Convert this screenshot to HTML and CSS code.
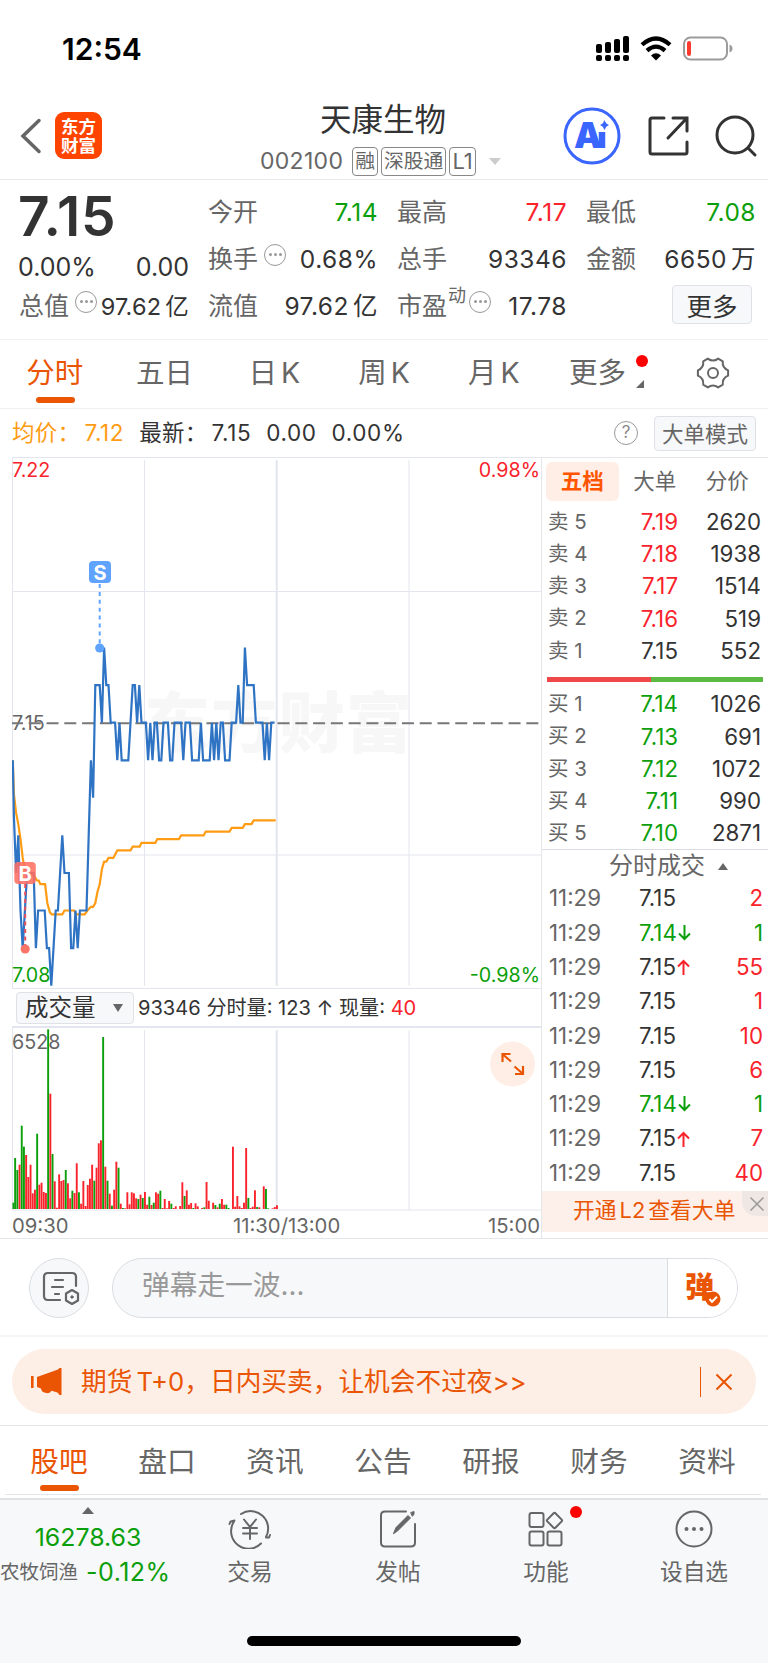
FILE: index.html
```html
<!DOCTYPE html>
<html lang="zh-CN">
<head>
  <meta charset="UTF-8">
  <meta name="viewport" content="width=device-width, initial-scale=1.0">
  <link rel="stylesheet" href="styles.css">
  <title>天康生物 002100</title>
</head>
<body>
  <div class="status">
    <span class="clock">12:54</span>
    <svg class="statusIcons" width="140" height="30" viewBox="0 0 140 30">
      <g fill="#000">
        <rect x="1" y="9" width="6" height="9" rx="2" /><rect x="10" y="7" width="6" height="11" rx="2" />
        <rect x="19" y="4" width="6" height="14" rx="2" /><rect x="28" y="1" width="6" height="17" rx="2" />
        <rect x="1" y="20" width="6" height="6" rx="2" /><rect x="10" y="20" width="6" height="6" rx="2" />
        <rect x="19" y="20" width="6" height="6" rx="2" /><rect x="28" y="20" width="6" height="6" rx="2" />
        <path d="M61 25.5l-5-5q5-4.4 10 0z" />
      </g>
      <g fill="none" stroke="#000" stroke-width="4.2">
        <path d="M47 9.8q14-12.500 28 0" /><path d="M52 15.600q9-8 18 0" />
      </g>
      <rect x="89" y="2.500" width="43" height="22" rx="6.500" fill="none" stroke="#9b9b9b" stroke-width="2" />
      <rect x="92" y="6" width="4" height="15" rx="2" fill="#ff3b30" />
      <path d="M134.500 9.500q3 1.200 3 4t-3 4z" fill="#9b9b9b" />
    </svg>
  </div>

  <header class="header">
    <svg class="back" width="22" height="36" viewBox="0 0 22 36"><path d="M19 2.500L3 18l16 15.500" fill="none" stroke="#666" stroke-width="3.500" stroke-linecap="round" /></svg>
    <div class="logo">东方<br>财富</div>
    <div class="stock">
      <h1>天康生物</h1>
      <div class="code"><span class="num">002100</span><i>融</i><i>深股通</i><i>L1</i><b class="arrow"></b></div>
    </div>
    <div class="actions">
      <svg width="60" height="60" viewBox="0 0 60 60">
        <circle cx="30" cy="30" r="27" fill="none" stroke="#3a66ff" stroke-width="3" />
        <text x="12" y="42" class="aiText">A</text>
        <path d="M40 26v16" stroke="#3a66ff" stroke-width="6.500" />
        <path d="M42.500 14q1.200 4 4.500 5-3.300 1.200-4.500 5-1.200-3.800-4.500-5 3.300-1 4.500-5z" fill="#3a66ff" />
      </svg>
      <svg width="44" height="44" viewBox="0 0 44 44" fill="none" stroke="#333" stroke-width="3" stroke-linecap="round">
        <path d="M18 4H6q-2 0-2 2v32q0 2 2 2h33q2 0 2-2V28M27 4h14v13M40 5L22 24" />
      </svg>
      <svg width="44" height="44" viewBox="0 0 44 44" fill="none" stroke="#333" stroke-width="3" stroke-linecap="round">
        <circle cx="21" cy="21" r="18" /><path d="M34 34l7 7" />
      </svg>
    </div>
  </header>

  <section class="quote">
    <div class="col first">
      <div class="price">7.15</div>
      <div class="change"><span>0.00%</span><span>0.00</span></div>
      <div class="item small"><label>总值</label><span class="dots"></span><em>97.62<u>亿</u></em></div>
    </div>
    <div class="col">
      <div class="item"><label>今开</label><em class="green">7.14</em></div>
      <div class="item"><label>换手</label><span class="dots"></span><em>0.68%</em></div>
      <div class="item"><label>流值</label><em>97.62<u>亿</u></em></div>
    </div>
    <div class="col">
      <div class="item"><label>最高</label><em class="red">7.17</em></div>
      <div class="item"><label>总手</label><em>93346</em></div>
      <div class="item"><label>市盈<sup>动</sup></label><span class="dots near"></span><em>17.78</em></div>
    </div>
    <div class="col">
      <div class="item"><label>最低</label><em class="green">7.08</em></div>
      <div class="item"><label>金额</label><em>6650<u>万</u></em></div>
      <div class="item"><button class="moreBtn">更多</button></div>
    </div>
  </section>

  <nav class="periods">
    <a class="active">分时</a><a>五日</a><a>日<u>K</u></a><a>周<u>K</u></a><a>月<u>K</u></a>
    <a class="more">更多<i class="redDot"></i><i class="corner"></i></a>
    <a>
      <svg width="34" height="34" viewBox="0 0 34 34" fill="none" stroke="#666" stroke-width="2" stroke-linejoin="round">
        <path d="M11.800 2.600Q17 6.500 22.200 2.600L26.800 5.300Q26 11.700 32.100 14.300V19.700Q26 22.300 26.800 28.700L22.200 31.400Q17 27.500 11.800 31.400L7.200 28.700Q8 22.300 1.900 19.700V14.300Q8 11.700 7.200 5.300z" />
        <circle cx="17" cy="17" r="5" />
      </svg>
    </a>
  </nav>

  <div class="summary">
    <span class="avg">均价：<b>7.12</b></span>
    <span class="last">最新：<b>7.15</b></span>
    <span>0.00</span>
    <span>0.00%</span>
    <div class="right"><span class="help">?</span><button>大单模式</button></div>
  </div>

  <main class="board">
    <div class="charts">
      <svg id="priceChart" class="priceChart" width="529" height="532" viewBox="0 0 529 532">
        <text x="132" y="290" class="watermark" textLength="268">东方财富</text>
        <g class="grid">
          <path d="M0 .5h530M.5 0v532M0 531.500h530" />
          <path d="M1 134.500h529M1 398h529M132.500 3v526M397 3v526" />
          <path d="M264.700 3v526" stroke-width="2" />
        </g>
        <text x="0" y="19.500" class="lbl red">7.22</text>
        <text x="528" y="19.500" class="lbl red" text-anchor="end">0.98%</text>
        <text x="0" y="273" class="lbl gray">7.15</text>
        <text x="0" y="524.500" class="lbl green">7.08</text>
        <text x="528" y="524.500" class="lbl green" text-anchor="end">-0.98%</text>
        <path d="M-1 266.200h528" stroke="#777" stroke-width="2" stroke-dasharray="12 5.770" />
        <polyline id="avgLine" fill="none" stroke="#ff9c14" stroke-width="2.200" />
        <polyline id="priceLine" fill="none" stroke="#2f74c4" stroke-width="2.200" />
        <path d="M87.700 127v60" stroke="#5fa3ff" stroke-width="2" stroke-dasharray="4 3.900" />
        <circle cx="87.700" cy="191" r="4.600" fill="#5fa3ff" />
        <rect x="77" y="104" width="22" height="22" rx="4" fill="#5fa3ff" />
        <text x="88" y="122.500" class="mark">S</text>
        <path d="M13.200 427v61" stroke="#e8505b" stroke-width="2" stroke-dasharray="4 3.500" />
        <circle cx="13.200" cy="492" r="4.600" fill="#fb7468" />
        <rect x="2.300" y="405" width="21.500" height="22" rx="4" fill="#ff6e62" opacity=".88" />
        <text x="13.200" y="423.500" class="mark">B</text>
      </svg>
      <div class="volHead">
        <div class="select">成交量<b></b></div>
        <span>93346 分时量: 123 ↑ 现量: <em class="red">40</em></span>
      </div>
      <svg id="volChart" class="volChart" width="529" height="185" viewBox="0 0 529 185">
        <g class="grid">
          <path d="M0 1h530" stroke-width="2" />
          <path d="M.5 0v184M132.500 4v180M397 4v180" />
          <path d="M264.700 4v180" stroke-width="2" />
          <path d="M0 184h530" />
        </g>
        <text x="0" y="23" class="lbl gray">6528</text>
        <g id="bars"></g>
        <circle cx="500.500" cy="38" r="22.500" fill="#feeee5" />
        <path d="M490.500 36v-8h8M491 28.500l8 7M511 40v8h-8M510.500 47.500l-8-7" fill="none" stroke="#ea5504" stroke-width="2.200" />
      </svg>
      <div class="axis"><span>09:30</span><span class="mid">11:30/13:00</span><span>15:00</span></div>
    </div>

    <aside class="side">
      <div class="sideTabs"><a class="on">五档</a><a>大单</a><a>分价</a></div>
      <div class="levels" id="sells"></div>
      <div class="ratio"><i class="sell"></i><i class="buy"></i></div>
      <div class="levels" id="buys"></div>
      <div class="tradesHead">分时成交<b></b></div>
      <div id="trades"></div>
      <div class="l2">开通<u>L2</u><u>查看大单</u>
        <span class="l2Close"><svg width="16" height="16" viewBox="0 0 16 16"><path d="M1.500 1.500l13 13M14.500 1.500l-13 13" stroke="#999" stroke-width="1.500" /></svg></span>
      </div>
    </aside>
  </main>

  <div class="comment">
    <div class="round">
      <svg width="38" height="38" viewBox="0 0 38 38" fill="none" stroke="#666" stroke-width="2.200" stroke-linecap="round">
        <path d="M18 31H6q-4 0-4-4V8q0-4 4-4h24q4 0 4 4v9M13 11h8M10 18h11M13 25h4" />
        <path d="M30 21l6 3.500v7L30 35l-6-3.500v-7z" stroke-linejoin="round" />
        <circle cx="30" cy="28" r="1.200" fill="#666" stroke-width="1" />
      </svg>
    </div>
    <div class="inputBox">
      <span>弹幕走一波...</span>
      <div class="danmu">弹
        <svg width="16" height="16" viewBox="0 0 16 16"><circle cx="8" cy="8" r="7.500" fill="#ea5504" /><path d="M4.500 8l2.500 2.800 5-5" fill="none" stroke="#fff" stroke-width="2" /></svg>
      </div>
    </div>
  </div>

  <div class="adWrap">
    <div class="ad">
      <svg width="32" height="28" viewBox="0 0 32 28" fill="#ea5504">
        <path d="M6 9L27 1.500l1.500-1.500H30.500v27h-2l-2-2.500-6-1.800q-1.500 3-5 2.300-5-.5-5.500-4.500l-4-1.500z" /><rect y="8" width="2.600" height="12" />
      </svg>
      <span>期货<u>T+0</u>，日内买卖，让机会不过夜&gt;&gt;</span>
      <i class="bar"></i>
      <svg class="adClose" width="18" height="18" viewBox="0 0 18 18"><path d="M1.500 1.500l15 15M16.500 1.500l-15 15" stroke="#ea5504" stroke-width="2" /></svg>
    </div>
  </div>

  <nav class="sections">
    <a class="active">股吧</a><a>盘口</a><a>资讯</a><a>公告</a><a>研报</a><a>财务</a><a>资料</a>
  </nav>

  <footer class="bottom">
    <div class="index">
      <b class="up"></b>
      <div class="indexValue">16278.63</div>
      <div class="indexRow"><span>农牧饲渔</span><em>-0.12%</em></div>
    </div>
    <div class="tool">
      <svg width="44" height="40" viewBox="0 0 44 40" fill="none" stroke="#666" stroke-width="2" stroke-linecap="round">
        <path d="M13 5a17.500 17.500 0 0 1 25 23M42 26l-1 2.500h-3M33 34.500A17.500 17.500 0 0 1 6 12.500M1.500 15l1-2.500 4-1" />
        <path d="M16 10.500l6 7.500 6-7.500M22 18v12M15 19h14M15 24.500h14" />
      </svg>
      <span>交易</span>
    </div>
    <div class="tool">
      <svg width="40" height="40" viewBox="0 0 40 40" fill="none" stroke="#666" stroke-width="2" stroke-linecap="round">
        <path d="M28 2.500H7q-4 0-4 4v27q0 4 4 4h26q4 0 4-4V15" />
        <path d="M15.500 24.500l2.500-6L30 6.500l2.500 2.500L20 21.500zM33 3.500l3-1v3l-1.500 1.500z" fill="#666" stroke-width="1" />
      </svg>
      <span>发帖</span>
    </div>
    <div class="tool">
      <svg width="40" height="40" viewBox="0 0 40 40" fill="none" stroke="#666" stroke-width="2">
        <rect x="3.500" y="4" width="14" height="14" rx="2" /><rect x="3.500" y="22.500" width="14" height="14" rx="2" /><rect x="21.500" y="22.500" width="14" height="14" rx="2" />
        <path d="M27.600 4.300q.9-.9 1.800 0l6.300 6.300q.9.900 0 1.800l-6.300 6.300q-.9.900-1.800 0l-6.300-6.300q-.9-.9 0-1.800z" />
      </svg>
      <i class="redDot"></i>
      <span>功能</span>
    </div>
    <div class="tool">
      <svg width="40" height="40" viewBox="0 0 40 40">
        <circle cx="20" cy="20" r="17.500" fill="none" stroke="#666" stroke-width="2" />
        <g fill="#666"><circle cx="12.500" cy="20" r="2" /><circle cx="20" cy="20" r="2" /><circle cx="27.500" cy="20" r="2" /></g>
      </svg>
      <span>设自选</span>
    </div>
    <div class="homeBar"></div>
  </footer>

  <script src="script.js"></script>
</body>
</html>
```
FILE: styles.css
```css
* {
  box-sizing: border-box;
}

body {
  margin: 0;
  width: 768px;
  font-family: Inter, "Noto Sans CJK SC", sans-serif;
  font-size: 22px;
  line-height: 1;
  color: #333;
  background-color: #fff;
}

i, em {
  font-style: normal;
}

b {
  font-weight: normal;
}

/* gap between latin and chinese text */
u {
  margin-left: 4px;
  text-decoration: none;
}

button {
  font-family: inherit;
  padding: 0;
  background-color: #f7f8fa;
  border: 1px solid #dfe1e6;
  border-radius: 4px;
}

.red {
  color: #f9232c;
  fill: #f9232c;
}

.green {
  color: #0b9f0b;
  fill: #0b9f0b;
}

.gray {
  fill: #666;
}

/* status bar */

.status {
  display: flex;
  justify-content: space-between;
  align-items: center;
  height: 98px;
  padding: 2px 33px 0 62px;
}

.clock {
  margin-top: -2px;
  font-size: 30px;
  font-weight: 600;
  color: #000;
}

/* header */

.header {
  display: flex;
  align-items: center;
  height: 82px;
  padding-left: 20px;
  border-bottom: 1px solid #e8e8ea;
}

.back {
  margin-top: -6px;
}

.logo {
  width: 47px;
  height: 47px;
  margin: -6px 0 0 13px;
  padding-top: 5px;
  border-radius: 9px;
  background-color: #ff4400;
  color: #fff;
  font-size: 17.5px;
  font-weight: 700;
  line-height: 19px;
  text-align: center;
}

.stock {
  width: 300px;
  margin-left: 131px;
  padding-left: 27px;
}

.stock h1 {
  margin: 0 0 7px 60px;
  font-size: 31.5px;
  font-weight: 400;
  line-height: 38px;
}

.code {
  display: flex;
  align-items: center;
  gap: 3px;
  height: 30px;
  color: #666;
}

.code .num {
  margin-right: 6px;
  font-size: 23px;
  letter-spacing: .3px;
}

.code i {
  height: 29px;
  padding: 0 2px;
  border: 1px solid #888;
  border-radius: 4px;
  font-size: 19.8px;
  line-height: 27px;
}

.code i:nth-of-type(3) {
  padding: 0 2px;
  font-size: 22px;
}

.arrow {
  margin-left: 10px;
  border: 6.5px solid transparent;
  border-top: 7px solid #ccc;
  border-bottom: 0;
}

.actions {
  display: flex;
  align-items: center;
  gap: 24px;
  margin: -6px 0 0 29px;
}

.actions svg {
  flex: none;
}

.aiText {
  font-size: 35px;
  font-weight: 900;
  fill: #3a66ff;
}

/* quote */

.quote {
  display: flex;
  gap: 19px;
  height: 160px;
  padding: 9px 12px 0 19px;
  border-bottom: 1px solid #f0f0f2;
}

.col {
  width: 170px;
}

.item {
  display: flex;
  align-items: center;
  height: 47px;
  font-size: 24.5px;
  letter-spacing: .5px;
  white-space: nowrap;
}

.item label {
  position: relative;
  font-size: 25px;
  letter-spacing: 0;
  color: #666;
}

.item em {
  margin-left: auto;
}

.item.small em {
  font-size: 23.5px;
  letter-spacing: .2px;
}

.item sup {
  position: absolute;
  left: 51px;
  top: -7px;
  font-size: 18px;
}

.dots {
  display: flex;
  flex: none;
  align-items: center;
  justify-content: center;
  width: 22px;
  height: 22px;
  margin: -10px 0 0 6px;
  border: 1.5px solid #999;
  border-radius: 50%;
}

.dots.near {
  margin-left: 22px;
}

.dots::before {
  content: "";
  width: 3px;
  height: 3px;
  border-radius: 50%;
  background-color: #999;
  box-shadow: -5px 0 #999, 5px 0 #999;
}

.price {
  height: 56px;
  margin-left: -1px;
  font-size: 55px;
  font-weight: 600;
  line-height: 54px;
  letter-spacing: .8px;
}

.change {
  display: flex;
  justify-content: space-between;
  align-items: center;
  height: 38px;
  margin-left: -1px;
  font-size: 25px;
  padding-top: 6px;
}

.moreBtn {
  width: 80px;
  height: 39px;
  margin: -4px 4px 0 auto;
  padding-bottom: 3px;
  font-size: 25.5px;
  color: #333;
}

/* chart periods */

.periods {
  display: flex;
  height: 69px;
  border-bottom: 1px solid #f0f0f2;
}

.periods a {
  position: relative;
  flex: 1;
  display: flex;
  align-items: center;
  justify-content: center;
  padding-bottom: 2px;
  font-size: 28.5px;
  color: #666;
}

.periods .active,
.sections .active {
  color: #ea5504;
}

.periods .active::after,
.sections .active::after {
  content: "";
  position: absolute;
  left: 50%;
  bottom: 5px;
  width: 39px;
  height: 6px;
  margin-left: -19px;
  border-radius: 3px;
  background-color: #ea5504;
}

.periods .more {
  left: -6px;
}

.redDot {
  position: absolute;
  width: 12px;
  height: 12px;
  border-radius: 50%;
  background-color: #ff0000;
}

.periods .redDot {
  right: 4px;
  top: 15px;
}

.corner {
  position: absolute;
  right: 8px;
  top: 40px;
  border-left: 8px solid transparent;
  border-bottom: 8px solid #666;
}

/* price summary */

.summary {
  display: flex;
  align-items: center;
  gap: 15px;
  height: 48px;
  padding: 0 12px;
  font-size: 22.5px;
  letter-spacing: .3px;
}

.summary .avg {
  color: #ff9c14;
}

.summary b {
  margin-left: 4px;
}

.summary b,
.summary > span:not([class]) {
  letter-spacing: .6px;
}

.summary .right {
  display: flex;
  align-items: center;
  gap: 16px;
  margin-left: auto;
  letter-spacing: 0;
}

.help {
  width: 24px;
  height: 24px;
  border: 1.5px solid #999;
  border-radius: 50%;
  color: #888;
  font-size: 17px;
  line-height: 21px;
  text-align: center;
}

.summary button {
  width: 102px;
  height: 35px;
  padding-bottom: 4px;
  font-size: 21.5px;
  color: #666;
}

/* charts */

.board {
  display: flex;
  height: 782px;
  padding-left: 12px;
  border-bottom: 1px solid #e4e6ea;
}

.charts {
  width: 529px;
}

.charts svg {
  display: block;
}

.grid path {
  stroke: #e3e6ee;
  fill: none;
}

.watermark {
  font-size: 66px;
  font-weight: 900;
  fill: #f7f7f7;
}

.lbl {
  font-size: 19.7px;
}

.mark {
  font-size: 20px;
  font-weight: 700;
  fill: #fff;
  text-anchor: middle;
}

.volHead {
  display: flex;
  align-items: center;
  gap: 4px;
  height: 37px;
  padding-left: 4px;
  font-size: 20.1px;
  white-space: nowrap;
}

.volHead span {
  padding-top: 2px;
}

.select {
  display: flex;
  align-items: center;
  justify-content: space-between;
  width: 118px;
  height: 32px;
  padding: 1px 10px 0 8px;
  border: 1px solid #dfe1e6;
  border-radius: 4px;
  background-color: #f7f8fa;
  font-size: 23.5px;
}

.select b {
  border: 5px solid transparent;
  border-top: 8px solid #666;
  border-bottom: 0;
}

.axis {
  display: grid;
  grid-template-columns: 1fr 110px 1fr;
  padding: 5px 1px 0 0;
  font-size: 20.3px;
  color: #666;
}

.axis span:last-child {
  text-align: right;
}

.axis .mid {
  padding-left: 12px;
  white-space: nowrap;
}

/* order book */

.side {
  width: 227px;
  border-left: 1px solid #e4e6ea;
  border-top: 1px solid #e4e6ea;
}

.sideTabs {
  display: flex;
  height: 48px;
  padding: 4px 0 0 4px;
}

.sideTabs a {
  width: 72.5px;
  height: 39px;
  font-size: 21.5px;
  line-height: 38px;
  text-align: center;
  color: #666;
}

.sideTabs .on {
  border-radius: 6px;
  background-color: #ffeee6;
  color: #ff5500;
  font-weight: 700;
}

.level {
  display: grid;
  grid-template-columns: 60px 70px 83px;
  align-items: center;
  height: 32.2px;
  padding-left: 6px;
  font-size: 22.3px;
}

.level span {
  font-size: 20.5px;
  color: #666;
}

.level em {
  text-align: right;
}

.ratio {
  display: flex;
  height: 5px;
  margin: 10px 5px 6.5px 5px;
}

.ratio .sell {
  width: 48%;
  background-color: #f04848;
}

.ratio .buy {
  flex: 1;
  background-color: #5cb944;
}

.tradesHead {
  display: flex;
  align-items: center;
  height: 32px;
  padding: 1px 0 0 67px;
  border-top: 1px solid #d9dce2;
  font-size: 24px;
  color: #666;
}

.tradesHead b {
  margin-left: 13px;
  border: 5.5px solid transparent;
  border-bottom: 7px solid #666;
  border-top: 0;
}

.trade {
  display: grid;
  grid-template-columns: 90px 60px 64px;
  align-items: center;
  height: 34.3px;
  padding-left: 7px;
  font-size: 22.3px;
}

.trade span {
  color: #666;
}

.trade em {
  display: flex;
  align-items: center;
}

.trade .qty {
  justify-content: flex-end;
}

.l2 {
  position: relative;
  height: 41px;
  margin-top: 1px;
  padding-left: 31px;
  background-color: #fdf0ea;
  font-size: 21.8px;
  line-height: 39px;
  color: #ea5504;
}

.l2 u {
  margin-left: 3px;
}

.l2Close {
  position: absolute;
  right: 0;
  top: 0;
  width: 26px;
  height: 25px;
  padding: 3px 0 0 7px;
  border-bottom-left-radius: 14px;
  background-color: #efe7e3;
  line-height: 1;
}

/* comment box */

.comment {
  display: flex;
  align-items: center;
  gap: 23px;
  height: 98px;
  padding: 2px 30px 0 29px;
  border-bottom: 2px solid #f5f5f7;
}

.round {
  display: flex;
  align-items: center;
  justify-content: center;
  width: 60px;
  height: 60px;
  padding-left: 3px;
  border: 1px solid #dadde3;
  border-radius: 50%;
  background-color: #f7f8fa;
}

.inputBox {
  flex: 1;
  display: flex;
  height: 60px;
  border: 1px solid #dadde3;
  border-radius: 30px;
  background-color: #f7f8fa;
  overflow: hidden;
}

.inputBox span {
  flex: 1;
  padding-left: 29px;
  font-size: 27.7px;
  line-height: 53px;
  color: #999;
}

.danmu {
  position: relative;
  width: 70px;
  padding-left: 17px;
  border-left: 1px solid #dadde3;
  background-color: #fff;
  color: #ea5504;
  font-size: 29px;
  font-weight: 900;
  line-height: 57px;
}

.danmu svg {
  position: absolute;
  left: 37px;
  top: 32px;
}

/* banner */

.adWrap {
  height: 89px;
  padding: 12px 12px 0;
  border-bottom: 1px solid #e4e6ea;
}

.ad {
  display: flex;
  align-items: center;
  height: 65px;
  padding: 0 23px 0 19px;
  border-radius: 33px;
  background-color: #fdeee6;
  color: #ea5504;
  font-size: 25.7px;
}

.ad span {
  margin-left: 18px;
}

.ad .bar {
  width: 1.5px;
  height: 30px;
  margin-left: auto;
  background-color: #ea5504;
}

.adClose {
  margin-left: 14px;
}

/* section tabs */

.sections {
  display: flex;
  height: 69px;
  margin: 0 7px 0 5px;
  border-bottom: 1px solid #e4e6ea;
}

.sections a {
  position: relative;
  flex: 1;
  padding-top: 22px;
  font-size: 28.7px;
  text-align: center;
  color: #666;
}

.sections .active::after {
  bottom: 3px;
}

/* bottom bar */

.bottom {
  position: relative;
  display: flex;
  height: 165px;
  margin-top: 3px;
  border-top: 2px solid #e0e2e6;
  background-color: #f7f8fa;
}

.index {
  width: 176px;
  color: #0b9f0b;
}

.up {
  display: block;
  width: 0;
  margin: 7px auto 0;
  border: 6.5px solid transparent;
  border-bottom: 7px solid #666;
  border-top: 0;
}

.indexValue {
  margin-top: 11px;
  font-size: 24.9px;
  text-align: center;
}

.indexRow {
  display: flex;
  align-items: center;
  gap: 8px;
  margin-top: 10px;
  font-size: 25px;
  letter-spacing: .5px;
  white-space: nowrap;
}

.indexRow span {
  font-size: 19.5px;
  letter-spacing: 0;
  color: #666;
}

.tool {
  position: relative;
  display: flex;
  flex-direction: column;
  align-items: center;
  gap: 12px;
  width: 148px;
  padding-top: 9px;
  font-size: 22.7px;
  color: #666;
}

.tool .redDot {
  right: 38px;
  top: 6px;
}

.homeBar {
  position: absolute;
  left: 247px;
  bottom: 17px;
  width: 274px;
  height: 10px;
  border-radius: 5px;
  background-color: #000;
}
```
FILE: script.js
```js
// [minute, price]
const prices = [
  [-0.5, 7.14], [0, 7.125], [1, 7.11], [2, 7.12], [3, 7.10], [4, 7.09], [5, 7.10], [6, 7.11], [9, 7.11],
  [10, 7.09], [11, 7.10], [14, 7.10], [15, 7.09], [16, 7.09], [17, 7.08], [18, 7.09], [19, 7.10], [20, 7.10],
  [21, 7.11], [22, 7.12], [23, 7.11], [25, 7.11], [26, 7.09], [27, 7.09], [28, 7.10], [29, 7.09], [30, 7.10],
  [33, 7.10], [34, 7.12], [35, 7.14], [36, 7.13], [37, 7.16], [39, 7.16], [40, 7.15], [41, 7.17], [42, 7.16],
  [43, 7.16], [44, 7.15], [46, 7.15], [47, 7.14], [48, 7.15], [49, 7.14], [52, 7.14], [53, 7.15], [54, 7.16],
  [55, 7.16], [56, 7.15], [57, 7.16], [58, 7.15], [60, 7.15], [61, 7.14], [62, 7.15], [63, 7.14], [64, 7.15],
  [65, 7.15], [66, 7.14], [67, 7.14], [68, 7.15], [70, 7.15], [71, 7.14], [72, 7.14], [73, 7.15], [76, 7.15],
  [77, 7.14], [78, 7.15], [80, 7.15], [81, 7.14], [84, 7.14], [85, 7.15], [86, 7.14], [89, 7.14], [90, 7.15],
  [91, 7.14], [92, 7.15], [93, 7.14], [94, 7.15], [95, 7.15], [96, 7.14], [98, 7.14], [99, 7.15], [101, 7.15],
  [102, 7.16], [103, 7.15], [104, 7.15], [105, 7.17], [106, 7.16], [109, 7.16], [110, 7.15], [113, 7.15],
  [114, 7.14], [115, 7.15], [116, 7.14], [117, 7.15], [118.5, 7.15]
];

const averages = [
  [-0.5, 7.14], [0, 7.131], [1, 7.126], [2, 7.123], [3, 7.119], [4, 7.114], [5, 7.111], [7, 7.110],
  [9.5, 7.109], [10.5, 7.108], [11.3, 7.108], [12, 7.107], [14.2, 7.107], [15.2, 7.102], [16.4, 7.0995],
  [17.2, 7.099], [22, 7.099], [23, 7.1], [27.4, 7.1], [28.3, 7.099], [32.2, 7.099], [33.4, 7.1], [35, 7.101],
  [36, 7.101], [37, 7.102], [38, 7.105], [39, 7.107], [40, 7.111], [41, 7.113], [42, 7.113], [43, 7.114],
  [45.2, 7.114], [47, 7.116], [53, 7.116], [54, 7.117], [57.2, 7.117], [58, 7.118], [64.3, 7.118],
  [65.2, 7.119], [75, 7.119], [76, 7.12], [86.3, 7.12], [87.2, 7.121], [98, 7.121], [99, 7.122],
  [104, 7.122], [105, 7.123], [108, 7.123], [109, 7.124], [119, 7.124]
];

// bar heights, negative = falling minute
const volumes = [
  -19, -153, -117, 133, -250, -187, 162, 96, 133, 47, 58, -226, 73, 79, 51, 48, -539, 346, -165, 83,
  4, 104, 84, 87, -117, 77, 32, -55, 48, 137, -50, 16, 84, 9, 72, 91, 133, -85, 124, 197,
  206, -516, 127, -85, 46, -10, 58, 142, -124, 16, -3, 2, 50, 14, 50, 47, 32, -30, 43, -33,
  51, 13, -37, 12, -19, 50, 46, -55, 3, 30, 2, 24, -16, 3, 8, 0, 9, 80, -39, 56,
  13, 18, -3, 17, 8, 0, 3, -5, 81, 25, 0, 19, -12, 5, -16, 30, 13, -13, -3, 0,
  187, 7, 39, 8, 3, 19, 183, -33, 3, 7, 56, -6, 5, 0, 68, -60, -2, 0, 2, 6, 11
];

const sells = [["卖5", "7.19", 2620, "red"], ["卖4", "7.18", 1938, "red"], ["卖3", "7.17", 1514, "red"], ["卖2", "7.16", 519, "red"], ["卖1", "7.15", 552, ""]];
const buys = [["买1", "7.14", 1026, "green"], ["买2", "7.13", 691, "green"], ["买3", "7.12", 1072, "green"], ["买4", "7.11", 990, "green"], ["买5", "7.10", 2871, "green"]];
const trades = [
  ["7.15", "", 2], ["7.14", "down", 1], ["7.15", "up", 55], ["7.15", "", 1], ["7.15", "", 10],
  ["7.15", "", 6], ["7.14", "down", 1], ["7.15", "up", 7], ["7.15", "", 40]
];

function toPoints(data) {
  return data.map(function (d) {
    return (1.87 + d[0] * 2.2).toFixed(1) + "," + ((7.22 - d[1]) * 3757 + 2.7).toFixed(1);
  }).join(" ");
}

document.getElementById("priceLine").setAttribute("points", toPoints(prices));
document.getElementById("avgLine").setAttribute("points", toPoints(averages));

let bars = "";
volumes.forEach(function (v, i) {
  const h = Math.abs(v) / 3;
  const x = Math.max(0.5, i * 2.2);
  bars += `<rect x="${x.toFixed(1)}" y="${(183 - h).toFixed(1)}" width="1.9" height="${h.toFixed(1)}" class="${v < 0 ? "green" : "red"}" />`;
});
document.getElementById("bars").innerHTML = bars;

function showLevels(id, rows) {
  document.getElementById(id).innerHTML = rows.map(function (r) {
    return `<div class="level"><span>${r[0][0]} ${r[0][1]}</span><em class="${r[3]}">${r[1]}</em><em>${r[2]}</em></div>`;
  }).join("");
}

showLevels("sells", sells);
showLevels("buys", buys);

const arrows = {
  up: '<svg width="15" height="18" viewBox="0 0 15 18"><path d="M7.500 17V3M2 8.500L7.500 3 13 8.500" fill="none" stroke="#f9232c" stroke-width="2" /></svg>',
  down: '<svg width="15" height="18" viewBox="0 0 15 18"><path d="M7.500 1v14M2 9.500L7.500 15 13 9.500" fill="none" stroke="#0b9f0b" stroke-width="2" /></svg>'
};

document.getElementById("trades").innerHTML = trades.map(function (t) {
  const down = t[1] === "down";
  return `<div class="trade"><span>11:29</span><em class="${down ? "green" : ""}">${t[0]}${arrows[t[1]] || ""}</em><em class="qty ${down ? "green" : "red"}">${t[2]}</em></div>`;
}).join("");
```
